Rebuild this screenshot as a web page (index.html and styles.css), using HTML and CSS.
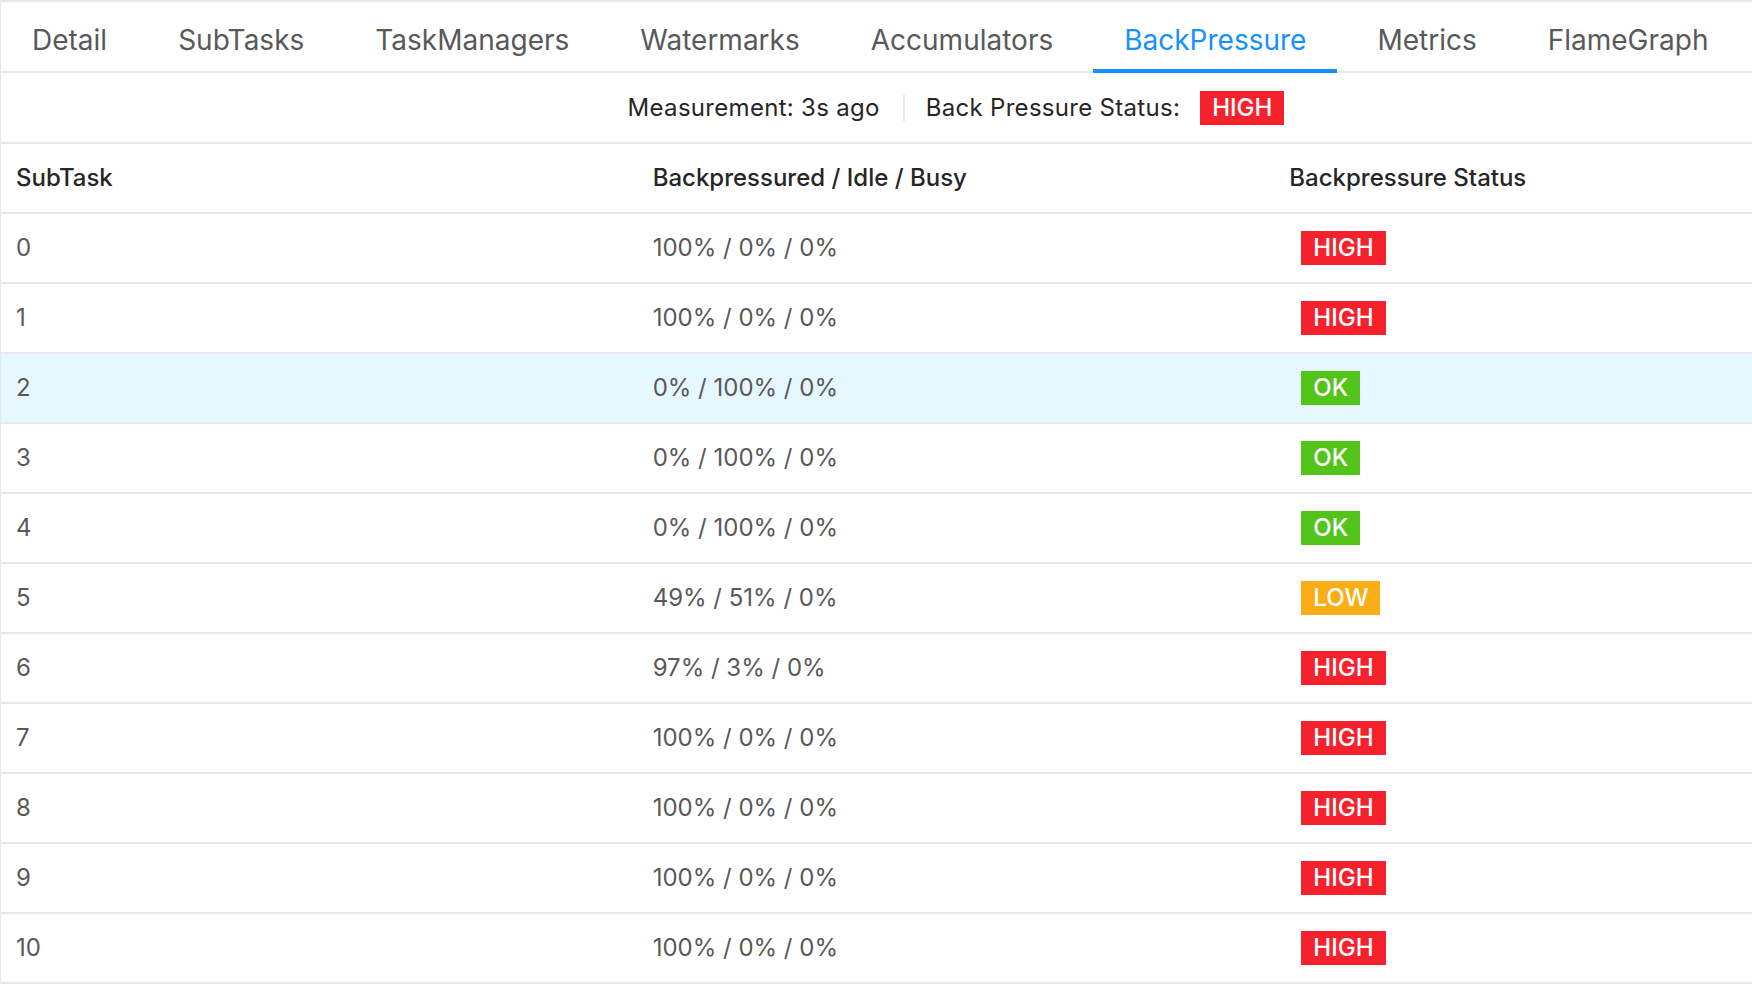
FILE: index.html
```html
<!DOCTYPE html>
<html lang="en">
<head>
<meta charset="utf-8">
<title>BackPressure</title>
<link rel="stylesheet" href="styles.css">
</head>
<body>
<div class="page">
  <nav class="tabs">
    <div class="tab">Detail</div>
    <div class="tab">SubTasks</div>
    <div class="tab">TaskManagers</div>
    <div class="tab">Watermarks</div>
    <div class="tab">Accumulators</div>
    <div class="tab active">BackPressure</div>
    <div class="tab">Metrics</div>
    <div class="tab">FlameGraph</div>
  </nav>
  <div class="measure">
    <span class="measure-text">Measurement: 3s ago</span>
    <span class="divider"></span>
    <span class="measure-text">Back Pressure Status:</span>
    <span class="tag tag-high measure-tag">HIGH</span>
  </div>
  <table class="bp-table">
    <thead>
      <tr><th>SubTask</th><th>Backpressured / Idle / Busy</th><th>Backpressure Status</th></tr>
    </thead>
    <tbody>
      <tr><td>0</td><td>100% / 0% / 0%</td><td><span class="tag tag-high">HIGH</span></td></tr>
      <tr><td>1</td><td>100% / 0% / 0%</td><td><span class="tag tag-high">HIGH</span></td></tr>
      <tr class="hover"><td>2</td><td>0% / 100% / 0%</td><td><span class="tag tag-ok">OK</span></td></tr>
      <tr><td>3</td><td>0% / 100% / 0%</td><td><span class="tag tag-ok">OK</span></td></tr>
      <tr><td>4</td><td>0% / 100% / 0%</td><td><span class="tag tag-ok">OK</span></td></tr>
      <tr><td>5</td><td>49% / 51% / 0%</td><td><span class="tag tag-low">LOW</span></td></tr>
      <tr><td>6</td><td>97% / 3% / 0%</td><td><span class="tag tag-high">HIGH</span></td></tr>
      <tr><td>7</td><td>100% / 0% / 0%</td><td><span class="tag tag-high">HIGH</span></td></tr>
      <tr><td>8</td><td>100% / 0% / 0%</td><td><span class="tag tag-high">HIGH</span></td></tr>
      <tr><td>9</td><td>100% / 0% / 0%</td><td><span class="tag tag-high">HIGH</span></td></tr>
      <tr><td>10</td><td>100% / 0% / 0%</td><td><span class="tag tag-high">HIGH</span></td></tr>
    </tbody>
  </table>
</div>
</body>
</html>
```
FILE: styles.css
```css
html, body {
  margin: 0;
  padding: 0;
  background: #fff;
  overflow: hidden;
}

body {
  font-family: Inter, "Noto Sans", sans-serif;
  font-size: 24px;
  color: #262626;
}

.page {
  width: 1910px;
  border-top: 2px solid #e8e8e8;
  border-left: 1px solid #e8e8e8;
}

.tabs {
  display: flex;
  height: 69px;
  border-bottom: 2px solid #e8e8e8;
}

.tab {
  position: relative;
  display: flex;
  align-items: center;
  padding: 6px 31px 0 31px;
  margin-right: 9px;
  font-size: 28px;
  color: #595959;
}

.tab.active {
  color: #1890ff;
}

.tab.active::after {
  content: "";
  position: absolute;
  left: 0;
  right: 0;
  bottom: -2px;
  height: 4px;
  background: #1890ff;
}

.measure {
  display: flex;
  justify-content: center;
  align-items: center;
  height: 69px;
  border-bottom: 2px solid #e8e8e8;
}

.measure-text {
  color: #262626;
  letter-spacing: 0.3px;
}

.divider {
  width: 2px;
  height: 26px;
  background: #e8e8e8;
  margin: 0 21px 0 23px;
}

.measure-tag {
  margin-left: 20px;
}

.tag {
  display: inline-flex;
  align-items: center;
  height: 34px;
  padding: 0 12px;
  color: #fff;
  font-size: 24px;
  font-weight: 500;
}

.tag-high { background: #f5222d; }
.tag-ok { background: #52c41a; }
.tag-low { background: #faad14; }

.bp-table {
  width: 100%;
  table-layout: fixed;
  border-collapse: collapse;
}

.bp-table th,
.bp-table td {
  height: 67px;
  padding: 0 15px 1px 15px;
  text-align: left;
  border-bottom: 2px solid #e8e8e8;
}

.bp-table th {
  font-weight: 500;
  color: #262626;
}

.bp-table td {
  color: #595959;
}

.bp-table td:last-child .tag {
  margin-left: 12px;
}

.bp-table tr.hover td {
  background: #e6f7ff;
}
```
